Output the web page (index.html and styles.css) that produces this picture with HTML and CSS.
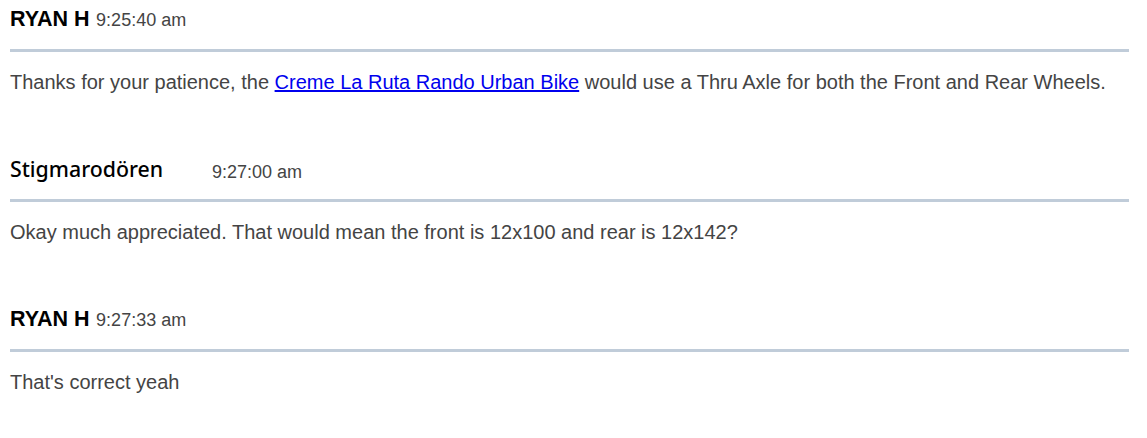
FILE: index.html
```html
<!DOCTYPE html>
<html>
<head>
<meta charset="utf-8">
<link rel="stylesheet" href="styles.css">
</head>
<body>
<div class="chat">
  <div class="msg">
    <div class="head"><span class="name">RYAN H</span> <span class="time">9:25:40 am</span></div>
    <div class="text">Thanks for your patience, the <a href="#">Creme La Ruta Rando Urban Bike</a> would use a Thru Axle for both the Front and Rear Wheels.</div>
  </div>
  <div class="msg">
    <div class="head"><span class="name alt">Stigmarodören</span><span class="time">9:27:00 am</span></div>
    <div class="text">Okay much appreciated. That would mean the front is 12x100 and rear is 12x142?</div>
  </div>
  <div class="msg">
    <div class="head"><span class="name">RYAN H</span> <span class="time">9:27:33 am</span></div>
    <div class="text">That's correct yeah</div>
  </div>
</div>
</body>
</html>
```
FILE: styles.css
```css
html, body { margin: 0; padding: 0; background: #fff; }
body { font-family: "Liberation Sans", Arial, sans-serif; }
.chat { padding: 0 18px 0 10px; }
.msg { height: 150px; }
.head {
  height: 52px;
  box-sizing: border-box;
  padding-top: 7px;
  border-bottom: 3px solid #c0ccd9;
  line-height: 24px;
}
.name { font-weight: bold; font-size: 21.5px; color: #000; margin-right: 2px; }
.name.alt {
  font-family: "Noto Sans", sans-serif;
  font-weight: 500;
  font-size: 21.3px;
  display: inline-block;
  width: 202px;
  margin-right: 0;
  vertical-align: 1px;
}
.time { font-size: 18px; color: #444; }
.text {
  margin-top: 18px;
  font-size: 20px;
  line-height: 24px;
  color: #444;
}
.text a { color: #0000ee; }
```
